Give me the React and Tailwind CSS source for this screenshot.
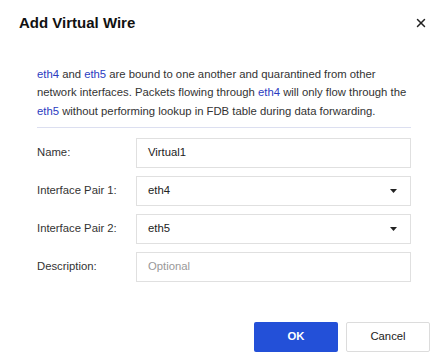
import { X } from "lucide-react";

function Field({ label, children }) {
  return (
    <div className="flex items-center h-[30px]">
      <label className="w-[99px] shrink-0 text-[11.3px] text-[#333]">{label}</label>
      {children}
    </div>
  );
}

function SelectBox({ value }) {
  return (
    <div className="flex-1 h-[30px] border border-[#e0e0e0] flex items-center justify-between pl-[11px] pr-[13px] text-[11.3px] text-[#222]">
      <span>{value}</span>
      <svg width="7" height="4" viewBox="0 0 7 4">
        <path d="M0 0 H7 L3.5 4 Z" fill="#222" />
      </svg>
    </div>
  );
}

export default function App() {
  return (
    <div className="w-[444px] h-[364px] bg-white font-['Liberation_Sans',Arial,sans-serif] relative">
      <div className="flex items-center justify-between pl-[19px] pr-[16px] pt-[12px]">
        <h2 className="text-[15px] font-bold text-[#111]">Add Virtual Wire</h2>
        <X className="w-[14px] h-[14px] text-[#222]" strokeWidth={2.5} />
      </div>

      <div className="pl-[37px] pr-[33px] pt-[30px] w-[444px]">
        <p className="text-[11.3px] leading-[18.7px] text-[#333]">
          <span className="text-[#2b3bbf]">eth4</span> and{" "}
          <span className="text-[#2b3bbf]">eth5</span> are bound to one another and quarantined from other network interfaces. Packets flowing through{" "}
          <span className="text-[#2b3bbf]">eth4</span> will only flow through the{" "}
          <span className="text-[#2b3bbf]">eth5</span> without performing lookup in FDB table during data forwarding.
        </p>
        <div className="mt-[6px] border-t border-[#dcdff0]" />

        <div className="mt-[10px] flex flex-col gap-[8px]">
          <Field label="Name:">
            <div className="flex-1 h-[30px] border border-[#e0e0e0] flex items-center pl-[11px] text-[11.3px] text-[#222]">
              Virtual1
            </div>
          </Field>
          <Field label="Interface Pair 1:">
            <SelectBox value="eth4" />
          </Field>
          <Field label="Interface Pair 2:">
            <SelectBox value="eth5" />
          </Field>
          <Field label="Description:">
            <div className="flex-1 h-[30px] border border-[#e0e0e0] flex items-center pl-[11px] text-[11.3px] text-[#999]">
              Optional
            </div>
          </Field>
        </div>
      </div>

      <div className="flex justify-end gap-[8px] pr-[14px] mt-[40px]">
        <button className="w-[84px] h-[30px] bg-[#2350d8] text-white text-[11.3px] font-bold rounded-[2px]">
          OK
        </button>
        <button className="w-[84px] h-[30px] border border-[#dcdcdc] bg-white text-[#222] text-[11.3px] rounded-[2px]">
          Cancel
        </button>
      </div>
    </div>
  );
}
